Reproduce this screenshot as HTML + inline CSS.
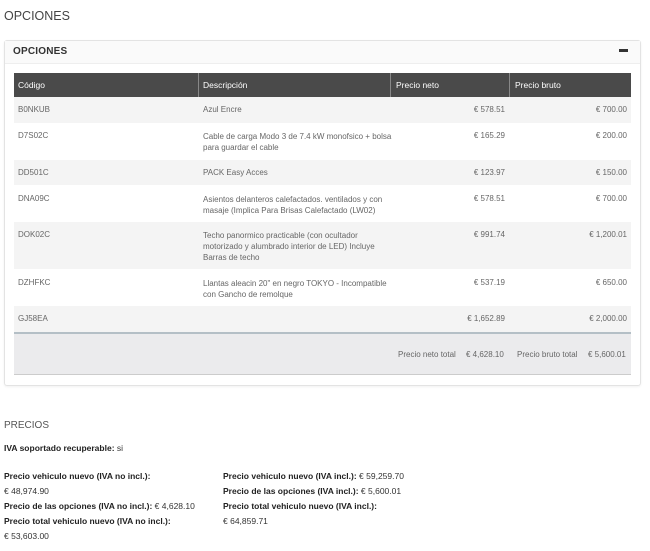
<!DOCTYPE html>
<html><head><meta charset="utf-8"><style>
*{margin:0;padding:0;box-sizing:border-box}
body{width:650px;height:551px;background:#fff;font-family:"Liberation Sans",sans-serif;color:#555;position:relative;overflow:hidden}
.a{position:absolute}
.t{font-size:8px;color:#666;white-space:nowrap}
.r{text-align:right}
.sh{background:#f4f4f4}
.b{font-weight:bold;color:#222}
.p{font-size:8.5px;color:#333;line-height:15px}
</style></head><body>
<div class="a" style="left:4px;top:9px;font-size:12.5px;color:#444">OPCIONES</div>
<div class="a" style="left:4px;top:40px;width:637px;height:346px;border:1px solid #e3e3e3;border-radius:3px;box-shadow:0 1px 2px rgba(0,0,0,.06)"></div>
<div class="a" style="left:5px;top:41px;width:635px;height:23px;background:#fafafa;border-bottom:1px solid #eee"></div>
<div class="a" style="left:13px;top:46px;font-size:10px;color:#333;font-weight:bold;letter-spacing:.2px">OPCIONES</div>
<div class="a" style="left:619px;top:49px;width:9px;height:3px;background:#333"></div>
<div class="a" style="left:14px;top:73px;width:617px;height:24px;background:#4a4a4a"></div>
<div class="a" style="left:198px;top:73px;width:1px;height:24px;background:#888"></div>
<div class="a" style="left:390px;top:73px;width:1px;height:24px;background:#888"></div>
<div class="a" style="left:509px;top:73px;width:1px;height:24px;background:#888"></div>
<div class="a t" style="left:18px;top:80px;color:#fff;font-size:8.5px">Código</div>
<div class="a t" style="left:203px;top:80px;color:#fff;font-size:8.5px">Descripción</div>
<div class="a t" style="left:396px;top:80px;color:#fff;font-size:8.5px">Precio neto</div>
<div class="a t" style="left:515px;top:80px;color:#fff;font-size:8.5px">Precio bruto</div>

<div class="a sh" style="left:14px;top:97px;width:617px;height:26px"></div>
<div class="a sh" style="left:14px;top:160px;width:617px;height:25px"></div>
<div class="a sh" style="left:14px;top:222px;width:617px;height:47px"></div>
<div class="a sh" style="left:14px;top:306px;width:617px;height:26px"></div>

<div class="a t" style="left:18px;top:105px">B0NKUB</div>
<div class="a t" style="left:203px;top:105px">Azul Encre</div>
<div class="a t r" style="left:400px;top:105px;width:105px">€ 578.51</div>
<div class="a t r" style="left:520px;top:105px;width:107px">€ 700.00</div>

<div class="a t" style="left:18px;top:131px">D7S02C</div>
<div class="a t" style="left:203px;top:131px;line-height:11px">Cable de carga Modo 3 de 7.4 kW monofsico + bolsa<br>para guardar el cable</div>
<div class="a t r" style="left:400px;top:131px;width:105px">€ 165.29</div>
<div class="a t r" style="left:520px;top:131px;width:107px">€ 200.00</div>

<div class="a t" style="left:18px;top:168px">DD501C</div>
<div class="a t" style="left:203px;top:168px">PACK Easy Acces</div>
<div class="a t r" style="left:400px;top:168px;width:105px">€ 123.97</div>
<div class="a t r" style="left:520px;top:168px;width:107px">€ 150.00</div>

<div class="a t" style="left:18px;top:194px">DNA09C</div>
<div class="a t" style="left:203px;top:194px;line-height:11px">Asientos delanteros calefactados. ventilados y con<br>masaje (Implica Para Brisas Calefactado (LW02)</div>
<div class="a t r" style="left:400px;top:194px;width:105px">€ 578.51</div>
<div class="a t r" style="left:520px;top:194px;width:107px">€ 700.00</div>

<div class="a t" style="left:18px;top:230px">DOK02C</div>
<div class="a t" style="left:203px;top:230px;line-height:11px">Techo panormico practicable (con ocultador<br>motorizado y alumbrado interior de LED) Incluye<br>Barras de techo</div>
<div class="a t r" style="left:400px;top:230px;width:105px">€ 991.74</div>
<div class="a t r" style="left:520px;top:230px;width:107px">€ 1,200.01</div>

<div class="a t" style="left:18px;top:278px">DZHFKC</div>
<div class="a t" style="left:203px;top:278px;line-height:11px">Llantas aleacin 20" en negro TOKYO - Incompatible<br>con Gancho de remolque</div>
<div class="a t r" style="left:400px;top:278px;width:105px">€ 537.19</div>
<div class="a t r" style="left:520px;top:278px;width:107px">€ 650.00</div>

<div class="a t" style="left:18px;top:314px">GJ58EA</div>
<div class="a t r" style="left:400px;top:314px;width:105px">€ 1,652.89</div>
<div class="a t r" style="left:520px;top:314px;width:107px">€ 2,000.00</div>

<div class="a" style="left:14px;top:332px;width:617px;height:43px;background:#ebebed;border-top:2px solid #b4bfc6;border-bottom:1px solid #ccc"></div>
<div class="a t" style="left:398px;top:350px">Precio neto total</div>
<div class="a t" style="left:466px;top:350px">€ 4,628.10</div>
<div class="a t" style="left:517px;top:350px">Precio bruto total</div>
<div class="a t" style="left:588px;top:350px">€ 5,600.01</div>

<div class="a" style="left:4px;top:420px;font-size:10px;color:#555">PRECIOS</div>
<div class="a p" style="left:4px;top:441px"><span class="b">IVA soportado recuperable:</span> si</div>
<div class="a p" style="left:4px;top:469px;width:215px"><span class="b">Precio vehiculo nuevo (IVA no incl.):</span><br>€ 48,974.90<br><span class="b">Precio de las opciones (IVA no incl.):</span> € 4,628.10<br><span class="b">Precio total vehiculo nuevo (IVA no incl.):</span><br>€ 53,603.00</div>
<div class="a p" style="left:223px;top:469px;width:220px"><span class="b">Precio vehiculo nuevo (IVA incl.):</span> € 59,259.70<br><span class="b">Precio de las opciones (IVA incl.):</span> € 5,600.01<br><span class="b">Precio total vehiculo nuevo (IVA incl.):</span><br>€ 64,859.71</div>
</body></html>
